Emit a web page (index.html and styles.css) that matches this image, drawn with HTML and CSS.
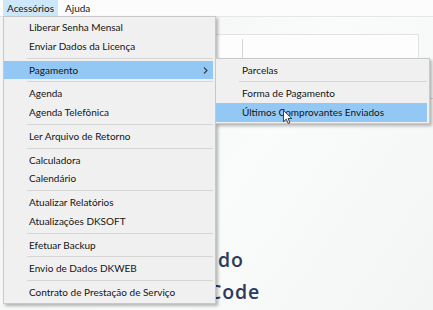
FILE: index.html
```html
<!DOCTYPE html>
<html lang="pt-BR">
<head>
<meta charset="utf-8">
<title>Acessórios</title>
<link rel="stylesheet" href="styles.css">
</head>
<body>
  <nav class="menubar">
    <span class="menubar-item is-open">Acessórios</span>
    <span class="menubar-item">Ajuda</span>
  </nav>

  <main class="page">
    <div class="panel">
      <div class="field"></div>
    </div>
    <div class="rule"></div>
    <h1 class="hero">
      <span class="hero-line hero-line-1">do</span>
      <span class="hero-line hero-line-2">Code</span>
    </h1>
  </main>

  <ul class="menu menu-main">
    <li class="menu-item">Liberar Senha Mensal</li>
    <li class="menu-item">Enviar Dados da Licença</li>
    <li class="menu-sep"></li>
    <li class="menu-item is-active has-sub">
      <span>Pagamento</span>
      <svg class="chevron" width="5" height="7" viewBox="0 0 5 7"><path d="M1 0.5 L4 3.5 L1 6.5" fill="none" stroke="#3a3a3a" stroke-width="1.1"/></svg>
    </li>
    <li class="menu-sep"></li>
    <li class="menu-item">Agenda</li>
    <li class="menu-item">Agenda Telefônica</li>
    <li class="menu-sep"></li>
    <li class="menu-item">Ler Arquivo de Retorno</li>
    <li class="menu-sep"></li>
    <li class="menu-item">Calculadora</li>
    <li class="menu-item">Calendário</li>
    <li class="menu-sep"></li>
    <li class="menu-item">Atualizar Relatórios</li>
    <li class="menu-item">Atualizações DKSOFT</li>
    <li class="menu-sep"></li>
    <li class="menu-item">Efetuar Backup</li>
    <li class="menu-sep"></li>
    <li class="menu-item">Envio de Dados DKWEB</li>
    <li class="menu-sep"></li>
    <li class="menu-item">Contrato de Prestação de Serviço</li>
  </ul>

  <ul class="menu menu-sub">
    <li class="menu-item">Parcelas</li>
    <li class="menu-sep"></li>
    <li class="menu-item">Forma de Pagamento</li>
    <li class="menu-item is-active">Últimos Comprovantes Enviados</li>
  </ul>

  <svg class="cursor" width="9" height="14" viewBox="0 0 12 19">
    <path d="M0.5 0.5 L0.5 16 L4.3 12.4 L6.8 18.2 L9.2 17.2 L6.8 11.5 L11.8 11.5 Z" fill="#ffffff" stroke="#000000" stroke-width="1" stroke-linejoin="miter"/>
  </svg>
</body>
</html>
```
FILE: styles.css
```css
* { box-sizing: border-box; }

html, body {
  margin: 0;
  padding: 0;
}

body {
  position: relative;
  width: 433px;
  height: 310px;
  overflow: hidden;
  font-family: "Lato", "Open Sans", sans-serif;
  font-size: 10px;
  color: #141414;
  background: linear-gradient(125deg, #f3f4f4 0%, #f6f7f7 35%, #fafbfb 55%, #f6f7f7 80%, #f3f4f4 100%);
}

/* ---- menu bar ---- */
.menubar {
  display: flex;
  gap: 3px;
  height: 17px;
  padding-left: 3px;
  background: #fcfcfc;
  border-bottom: 1px solid #e6e6e6;
}

.menubar-item {
  height: 16px;
  padding: 1px 4px 0;
  line-height: 15px;
}

.menubar-item.is-open {
  background: #cce6fa;
}

/* ---- page behind the menus ---- */
.page {
  display: flex;
  flex-direction: column;
}

.panel {
  height: 62px;
  margin: 17px 14px 0 160px;
  border: 1px solid #e3e3e3;
  border-bottom: none;
  background: #fdfdfd;
}

.field {
  height: 57px;
  margin: 4px 0 0 81px;
  border-left: 1px solid #d6d6d6;
}

.rule {
  margin: 2px 0 0 400px;
  border-top: 1px solid #d8d8d8;
}

.hero {
  display: flex;
  flex-direction: column;
  margin: 145px 0 0 209px;
  font-family: "Open Sans", "Lato", sans-serif;
  font-weight: 600;
  font-size: 19.5px;
  letter-spacing: 0.9px;
  line-height: 32px;
  color: #2d3a5c;
}

.hero-line-1 { padding-left: 9px; }

/* ---- menus (overlay) ---- */
.menu {
  position: absolute;
  margin: 0;
  list-style: none;
  background: #f0f0f0;
  border: 1px solid #c9c9c9;
  box-shadow: 2px 2px 3px rgba(0, 0, 0, 0.28);
}

.menu-main {
  left: 3px;
  top: 16px;
  width: 213px;
  padding: 1px 2px 1.5px 0;
}

.menu-sub {
  left: 215px;
  top: 58px;
  width: 215px;
  padding: 1.5px 2px 1.5px 0;
}

.menu-item {
  display: flex;
  align-items: center;
  justify-content: space-between;
  height: 18.75px;
  line-height: 18.75px;
  padding: 0 5px 0 25px;
  white-space: nowrap;
}

.menu-sub .menu-item { padding-left: 26px; }

.menu-item.is-active {
  background: #93c8f4;
}

.menu-sep {
  height: 1px;
  margin: 2px 0 2px 23px;
  background: #d5d5d5;
}

.chevron {
  display: block;
  margin-top: 1px;
}

.cursor {
  position: absolute;
  left: 283px;
  top: 110px;
}
```
